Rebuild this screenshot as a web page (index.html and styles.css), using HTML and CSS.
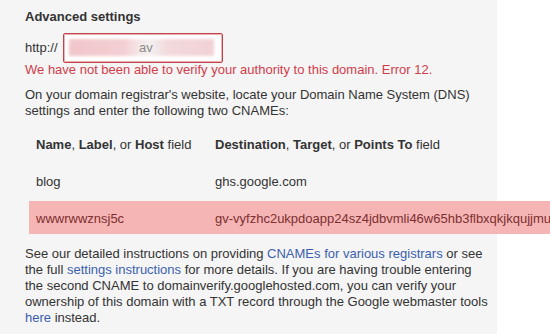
FILE: index.html
```html
<!DOCTYPE html>
<html>
<head>
<meta charset="utf-8">
<title>Advanced settings</title>
<link rel="stylesheet" href="styles.css">
</head>
<body>
<div class="panel">
  <h3 class="title">Advanced settings</h3>
  <div class="url-row">
    <span class="url-prefix">http://</span>
    <div class="url-input"><span class="blur"></span><span class="url-text">av</span></div>
  </div>
  <p class="error">We have not been able to verify your authority to this domain. Error 12.</p>
  <p class="intro">On your domain registrar's website, locate your Domain Name System (DNS)<br>settings and enter the following two CNAMEs:</p>
  <table class="cname">
    <thead>
      <tr>
        <th class="col-name"><b>Name</b>, <b>Label</b>, or <b>Host</b> field</th>
        <th><b>Destination</b>, <b>Target</b>, or <b>Points To</b> field</th>
      </tr>
    </thead>
    <tbody>
      <tr>
        <td>blog</td>
        <td>ghs.google.com</td>
      </tr>
      <tr class="flag">
        <td>wwwrwwznsj5c</td>
        <td>gv-vyfzhc2ukpdoapp24sz4jdbvmli46w65hb3flbxqkjkqujjmuu.domainverify.googlehosted.com</td>
      </tr>
    </tbody>
  </table>
  <p class="help">See our detailed instructions on providing <a href="#">CNAMEs for various registrars</a> or see<br>the full <a href="#">settings instructions</a> for more details. If you are having trouble entering<br>the second CNAME to domainverify.googlehosted.com, you can verify your<br>ownership of this domain with a TXT record through the Google webmaster tools<br><a href="#">here</a> instead.</p>
</div>
</body>
</html>
```

FILE: styles.css
```css
html, body {
  margin: 0;
  padding: 0;
  overflow: hidden;
  background: #ffffff;
}

body {
  font-family: "Liberation Sans", Arial, sans-serif;
  font-size: 13px;
  line-height: 16px;
  color: #333333;
}

.panel {
  box-sizing: border-box;
  width: 497px;
  min-height: 334px;
  padding: 9px 0 20px 25px;
  background: #f5f5f5;
}

.title {
  margin: 0;
  font-size: 13px;
  line-height: 16px;
  font-weight: bold;
  color: #333333;
}

.url-row {
  display: flex;
  align-items: center;
  margin-top: 8px;
}

.url-prefix {
  margin-right: 5.5px;
}

.url-input {
  position: relative;
  box-sizing: border-box;
  width: 160px;
  height: 30px;
  border: 1px solid #bf4349;
  border-radius: 2px;
  background: #ffffff;
  box-shadow: inset 0 0 0 1px #eab3b6;
  overflow: hidden;
}

.blur {
  position: absolute;
  left: 5px;
  right: 8px;
  top: 5px;
  bottom: 6px;
  background: linear-gradient(90deg, #f1c6cb 0%, #f3cfd3 38%, #f5e6e7 48%, #f3f0f0 56%, #f2d9dc 68%, #f1d2d6 100%);
  filter: blur(1.5px);
}

.url-text {
  position: absolute;
  left: 75px;
  top: 0;
  line-height: 28px;
  color: #8a8a8a;
}

.error {
  margin: -1px 0 0;
  color: #d23c4a;
}

.intro {
  margin: 9px -20px 0 0;
  white-space: nowrap;
}

.cname {
  table-layout: fixed;
  width: 530px;
  border-collapse: separate;
  border-spacing: 0 4px;
  margin: 4px 0 0 4px;
  white-space: nowrap;
}

.cname th,
.cname td {
  padding: 10px 7px 7px;
  text-align: left;
  font-weight: normal;
  vertical-align: top;
  overflow: hidden;
}

.cname .col-name {
  width: 165px;
}

.cname b {
  font-weight: bold;
}

.flag td {
  background: #f5b5b5;
  color: #7d2f2f;
}

.help {
  margin: 8px -20px 0 0;
  white-space: nowrap;
}

.help a {
  color: #3b5fae;
  text-decoration: none;
}
```
